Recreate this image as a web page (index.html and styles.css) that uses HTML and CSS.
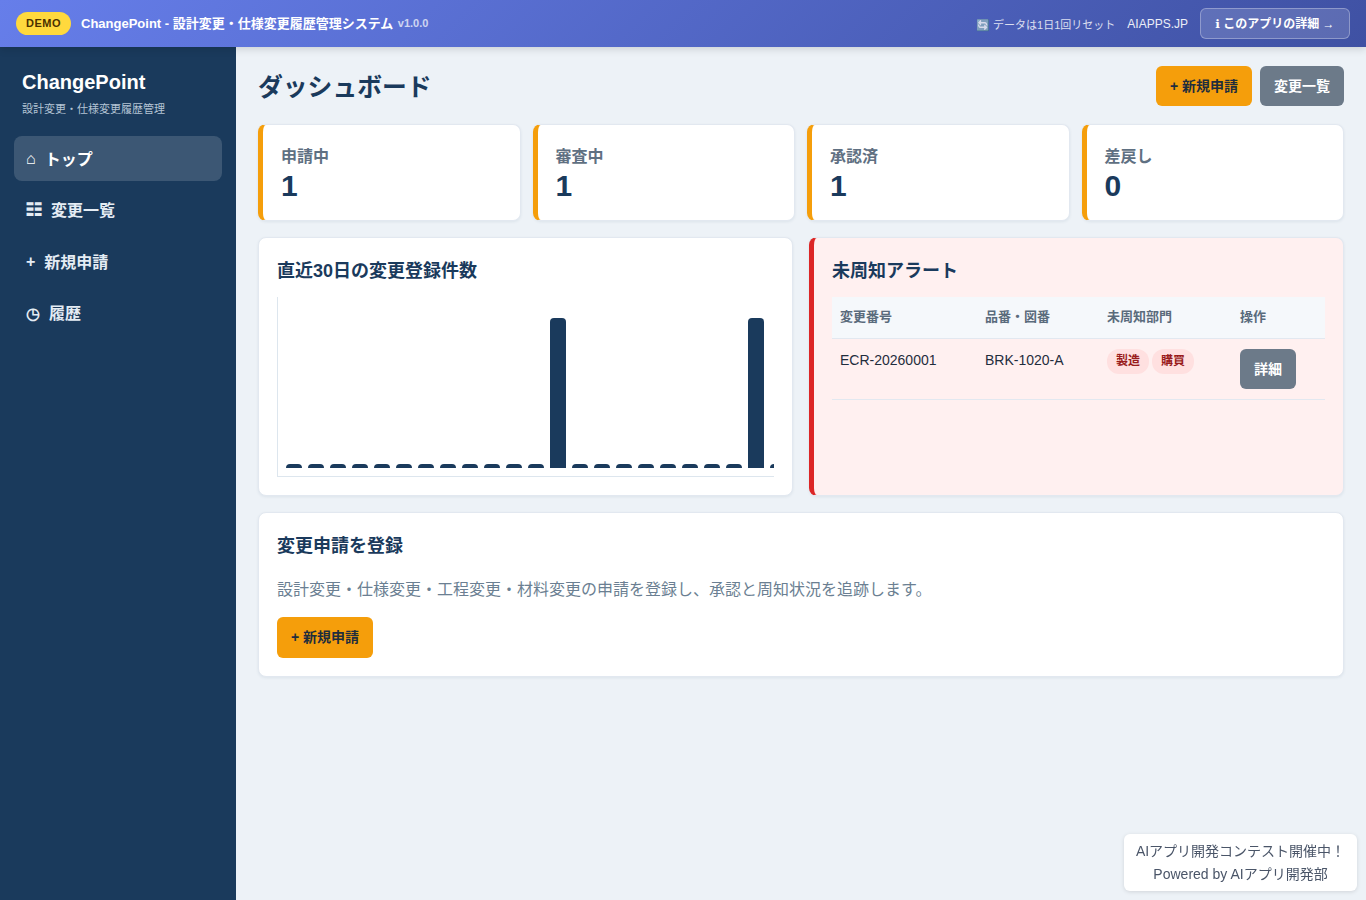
FILE: index.html
```html
<!DOCTYPE html>
<html lang="ja">
<head>
<meta charset="utf-8">
<title>ChangePoint</title>
<link rel="stylesheet" href="styles.css">
</head>
<body>
<header class="topbar">
  <div class="topbar-left">
    <span class="demo">DEMO</span>
    <span class="app-title">ChangePoint - 設計変更・仕様変更履歴管理システム</span>
    <span class="version">v1.0.0</span>
  </div>
  <div class="topbar-right">
    <span class="reset">🔄 データは1日1回リセット</span>
    <span class="site">AIAPPS.JP</span>
    <a class="about"><span class="info">ℹ</span> このアプリの詳細 <small>→</small></a>
  </div>
</header>
<div class="shell">
  <aside class="sidebar">
    <div class="brand">
      <div class="brand-name">ChangePoint</div>
      <div class="brand-sub">設計変更・仕様変更履歴管理</div>
    </div>
    <nav class="nav">
      <a class="nav-item active"><span>⌂</span><span class="nav-label">トップ</span></a>
      <a class="nav-item"><span>☷</span><span class="nav-label">変更一覧</span></a>
      <a class="nav-item"><span>+</span><span class="nav-label">新規申請</span></a>
      <a class="nav-item"><span>◷</span><span class="nav-label">履歴</span></a>
    </nav>
  </aside>
  <main class="main">
    <div class="page-head">
      <h1>ダッシュボード</h1>
      <div class="actions">
        <a class="btn btn-primary">+ 新規申請</a>
        <a class="btn btn-muted">変更一覧</a>
      </div>
    </div>
    <section class="stats">
      <div class="stat"><div class="stat-label">申請中</div><div class="stat-value">1</div></div>
      <div class="stat"><div class="stat-label">審査中</div><div class="stat-value">1</div></div>
      <div class="stat"><div class="stat-label">承認済</div><div class="stat-value">1</div></div>
      <div class="stat"><div class="stat-label">差戻し</div><div class="stat-value">0</div></div>
    </section>
    <section class="two-col">
      <div class="card">
        <h2>直近30日の変更登録件数</h2>
        <div class="chart">
          <i class="bar"></i><i class="bar"></i><i class="bar"></i><i class="bar"></i><i class="bar"></i><i class="bar"></i>
          <i class="bar"></i><i class="bar"></i><i class="bar"></i><i class="bar"></i><i class="bar"></i><i class="bar"></i>
          <i class="bar tall"></i>
          <i class="bar"></i><i class="bar"></i><i class="bar"></i><i class="bar"></i><i class="bar"></i><i class="bar"></i><i class="bar"></i><i class="bar"></i>
          <i class="bar tall"></i>
          <i class="bar"></i><i class="bar"></i><i class="bar"></i><i class="bar"></i><i class="bar"></i><i class="bar"></i><i class="bar"></i><i class="bar"></i>
        </div>
      </div>
      <div class="card alert">
        <h2>未周知アラート</h2>
        <table class="table">
          <thead>
            <tr><th class="c1">変更番号</th><th class="c2">品番・図番</th><th class="c3">未周知部門</th><th>操作</th></tr>
          </thead>
          <tbody>
            <tr>
              <td>ECR-20260001</td>
              <td>BRK-1020-A</td>
              <td class="tags"><span class="tag">製造</span><span class="tag">購買</span></td>
              <td><a class="btn btn-muted btn-detail">詳細</a></td>
            </tr>
          </tbody>
        </table>
      </div>
    </section>
    <section class="card register">
      <h3>変更申請を登録</h3>
      <p>設計変更・仕様変更・工程変更・材料変更の申請を登録し、承認と周知状況を追跡します。</p>
      <a class="btn btn-primary btn-register">+ 新規申請</a>
    </section>
  </main>
</div>
<aside class="promo">AIアプリ開発コンテスト開催中！<br>Powered by AIアプリ開発部</aside>
</body>
</html>
```

FILE: styles.css
```css
* { box-sizing: border-box; }
html, body { height: 100%; }
body {
  margin: 0;
  background: #edf2f7;
  color: #1a3a5c;
  font-family: "Liberation Sans", "Noto Sans CJK JP", sans-serif;
  font-size: 14px;
  overflow: hidden;
}
.topbar {
  height: 47px;
  display: flex;
  align-items: center;
  justify-content: space-between;
  padding: 0 16px;
  background: linear-gradient(135deg, #667eea 0%, #3f51a3 100%);
  color: #fff;
  box-shadow: 0 2px 8px rgba(0, 0, 0, .15);
  position: relative;
  z-index: 2;
}
.topbar-left { display: flex; align-items: center; }
.demo {
  background: #ffd93d;
  color: #4a3000;
  font-size: 11px;
  font-weight: 700;
  letter-spacing: .5px;
  padding: 4px 10px;
  height: 23px;
  line-height: 15px;
  border-radius: 12px;
  margin-right: 10px;
}
.app-title { font-size: 13px; font-weight: 600; margin-right: 4.5px; margin-bottom: 3px; }
.version { font-size: 11px; opacity: .7; font-weight: 700; margin-bottom: 2px; }
.topbar-right { display: flex; align-items: center; }
.reset { font-size: 11px; opacity: .8; margin-right: 12px; }
.site { font-size: 12px; opacity: .9; margin-right: 12px; }
.about {
  display: block;
  height: 31px;
  line-height: 30px;
  width: 150px;
  text-align: center;
  font-size: 12px;
  font-weight: 700;
  background: rgba(255, 255, 255, .15);
  border: 1px solid rgba(255, 255, 255, .3);
  border-radius: 6px;
}
.about small { font-size: 12px; font-weight: 400; }
.info { font-family: "DejaVu Sans", sans-serif; }
.shell { display: flex; height: 853px; }
.sidebar { width: 236px; flex: none; background: #1a3a5c; color: #fff; padding: 24px 14px; }
.brand { padding: 0 8px; margin-bottom: 19px; }
.brand-name { font-size: 20px; font-weight: 700; line-height: 23px; }
.brand-sub { font-size: 11px; color: #b4c4d4; margin-top: 7px; line-height: 16px; }
.nav { display: flex; flex-direction: column; gap: 6.5px; }
.nav-item {
  display: flex;
  gap: 9px;
  align-items: center;
  height: 45px;
  padding: 0 12px;
  border-radius: 8px;
  font-size: 16px;
  font-weight: 600;
  color: #e4ecf4;
}
.nav-item.active { background: rgba(255, 255, 255, .15); color: #fff; }
.nav-label { margin-bottom: 2px; }
.main { flex: 1; padding: 19px 22px; min-width: 0; }
.page-head { display: flex; align-items: center; justify-content: space-between; height: 40px; margin-bottom: 18px; }
h1 { margin: 0 0 2px; font-size: 24.8px; font-weight: 700; color: #1a3a5c; }
.actions { display: flex; gap: 8px; }
.btn {
  display: inline-block;
  height: 40px;
  line-height: 40px;
  padding: 0 14px;
  border-radius: 6px;
  font-size: 14px;
  font-weight: 700;
}
.btn-primary { background: #f59e0b; color: #1f2d3d; }
.btn-muted { background: #6c7a89; color: #fff; }
.stats { display: grid; grid-template-columns: repeat(4, 1fr); gap: 12px; margin-bottom: 16px; }
.stat {
  height: 97px;
  padding: 20px 18px;
  background: #fff;
  border: 1px solid #e2e8f0;
  border-left: 5px solid #f59e0b;
  border-radius: 8px;
  box-shadow: 0 1px 3px rgba(26, 58, 92, .08);
}
.stat-label { font-size: 16px; line-height: 23px; font-weight: 600; color: #5f7082; }
.stat-value { font-size: 30px; font-weight: 700; line-height: 36px; color: #1a3a5c; }
.two-col { display: grid; grid-template-columns: 1fr 1fr; gap: 16px; margin-bottom: 16px; }
.card {
  background: #fff;
  border: 1px solid #e2e8f0;
  border-radius: 8px;
  box-shadow: 0 1px 3px rgba(26, 58, 92, .08);
  padding: 18px;
  min-width: 0;
}
.two-col .card { height: 259px; }
h2 { margin: 0 0 12px; padding-top: 1px; font-size: 18px; line-height: 28px; font-weight: 700; color: #1a3a5c; }
.chart {
  height: 180px;
  display: flex;
  align-items: flex-end;
  gap: 6px;
  padding: 8px;
  overflow: hidden;
  border-left: 1px solid #dde6ee;
  border-bottom: 1px solid #dde6ee;
}
.bar { flex: 0 0 16px; height: 4px; background: #1a3a5c; border-radius: 4px 4px 0 0; }
.bar.tall { height: 150px; }
.alert { background: #fff0f0; border-left: 5px solid #dc2626; }
.table { width: 100%; border-collapse: collapse; table-layout: fixed; font-size: 14px; }
.table th {
  height: 41px;
  padding: 0 8px 3px;
  text-align: left;
  font-size: 13px;
  font-weight: 700;
  color: #5a6b7c;
  background: #f5f8fb;
  border-bottom: 1px solid #e2e8f0;
}
.c1 { width: 145px; }
.c2 { width: 122px; }
.c3 { width: 133px; }
.table td {
  height: 61px;
  padding: 10px 8px;
  vertical-align: top;
  line-height: 22px;
  color: #1f2d3d;
  border-bottom: 1px solid #e2e8f0;
}
.tag {
  display: inline-block;
  height: 25px;
  line-height: 25px;
  padding: 0 9px;
  margin-right: 3px;
  border-radius: 12px;
  background: #ffe0e0;
  color: #991b1b;
  font-size: 12px;
  font-weight: 700;
  vertical-align: top;
}
.btn-detail { padding: 0 14px; }
.register { height: 165px; }
h3 { margin: 0 0 16px; padding-top: 1px; font-size: 18px; line-height: 28px; font-weight: 700; color: #1a3a5c; }
.register p { margin: 0 0 13px; font-size: 16px; line-height: 28px; color: #6b7f92; }
.btn-register { height: 41px; line-height: 41px; }
.promo {
  position: fixed;
  right: 9px;
  bottom: 9px;
  width: 233px;
  height: 57px;
  padding: 6px 8px;
  background: #fff;
  border-radius: 6px;
  box-shadow: 0 1px 4px rgba(0, 0, 0, .12);
  font-size: 14px;
  line-height: 23px;
  text-align: center;
  color: #4a5568;
}
```
